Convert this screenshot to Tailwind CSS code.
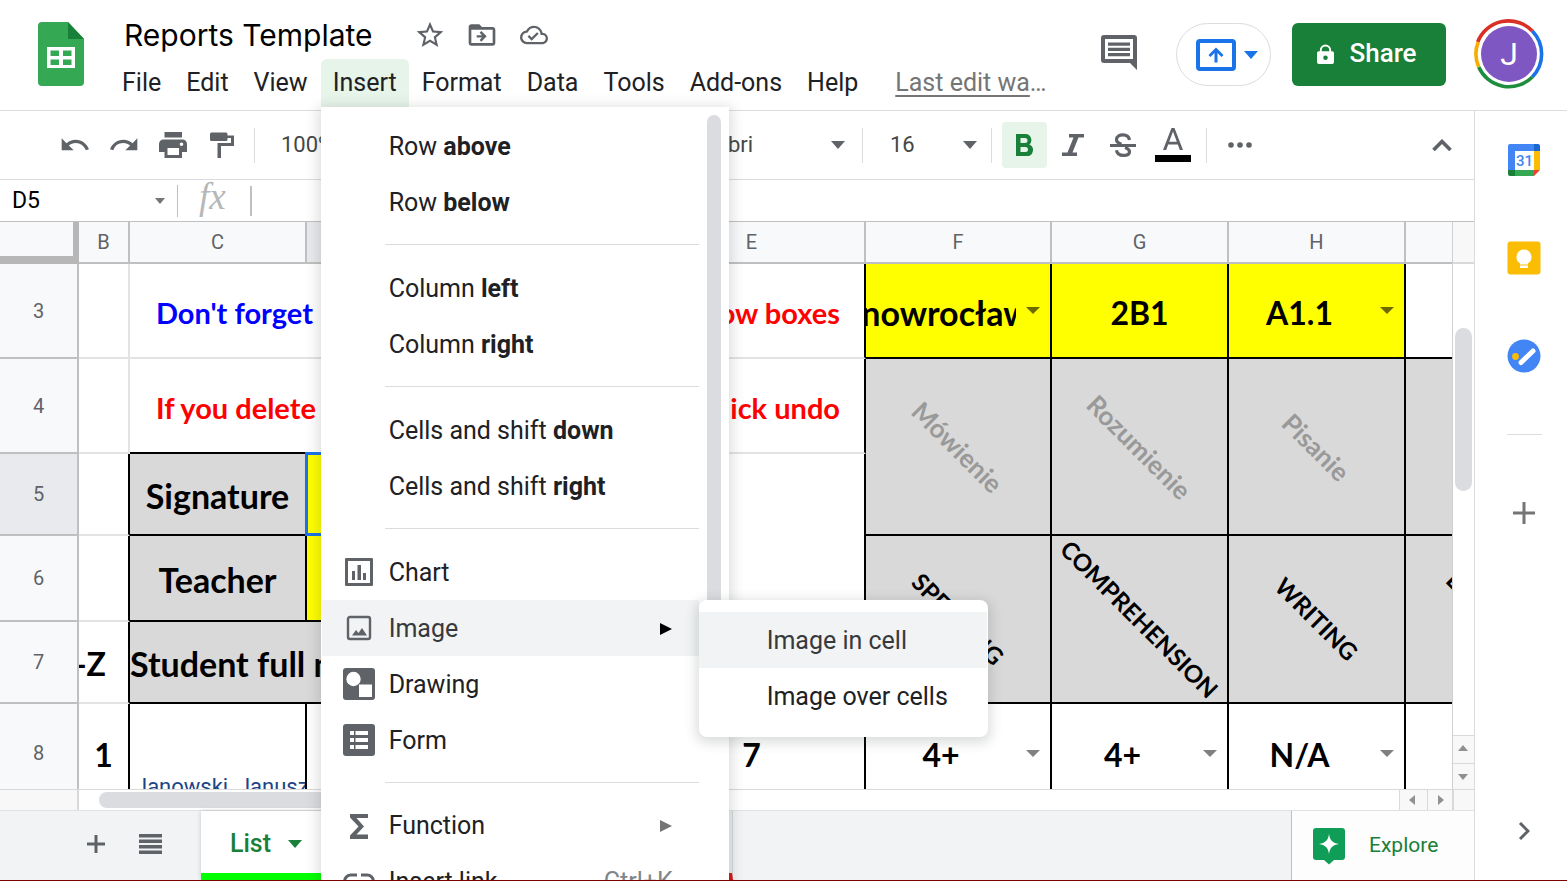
<!DOCTYPE html>
<html lang="en">
<head>
<meta charset="utf-8">
<title>Reports Template</title>
<script src="https://cdn.jsdelivr.net/npm/@tailwindcss/browser@4"></script>
</head>
<body class="bg-white font-['Roboto',sans-serif] text-[#202124]">
<div class="flex h-screen flex-col overflow-hidden">

  <!-- Title bar -->
  <header class="relative z-20 flex h-[111px] shrink-0 border-b border-[#dadce0] bg-white">
    <a href="#" aria-label="Sheets home" class="mt-[22px] ml-[38px] block h-16 w-[46px] shrink-0">
      <svg viewBox="0 0 46 64" class="h-16 w-[46px]"><path d="M4 0H30L46 17V60a4 4 0 0 1-4 4H4a4 4 0 0 1-4-4V4a4 4 0 0 1 4-4z" fill="#34a853"/><path d="M30 0 46 17H30z" fill="#188038"/><path fill="#fff" fill-rule="evenodd" d="M9 25H37V46H9zM12.500 28.500V34H21V28.500zM25 28.500V34H33.500V28.500zM12.500 37.500V43H21V37.500zM25 37.500V43H33.500V37.500z"/></svg>
    </a>
    <div class="ml-[26px] flex flex-col">
      <div class="flex h-[59px] items-center pt-[11px] pl-[14px] text-[#5f6368]">
        <h1 class="font-['Inter',sans-serif] text-[30px] leading-9 whitespace-nowrap text-black">Reports Template</h1>
        <div class="ml-[41px] flex items-center gap-5">
          <button aria-label="Star"><svg viewBox="0 0 24 24" class="size-8" fill="currentColor"><path d="M22 9.240l-7.190-.620L12 2 9.190 8.630 2 9.240l5.460 4.730L5.820 21 12 17.270 18.180 21l-1.630-7.030L22 9.240zM12 15.400l-3.760 2.270 1-4.280-3.320-2.880 4.380-.380L12 6.100l1.710 4.040 4.380.380-3.320 2.880 1 4.280L12 15.400z"/></svg></button>
          <button aria-label="Move"><svg viewBox="0 0 24 24" class="size-8" fill="currentColor"><path d="M20 6h-8l-2-2H4c-1.100 0-2 .9-2 2v12c0 1.100.9 2 2 2h16c1.100 0 2-.9 2-2V8c0-1.100-.9-2-2-2zm0 12H4V8h16v10zM11.500 17l4-4-4-4-1.300 1.300 1.800 1.800H8v1.800h4l-1.800 1.800z"/></svg></button>
          <button aria-label="Document status"><svg viewBox="0 0 24 24" class="ml-[2px] size-7" fill="currentColor"><path d="M19.350 10.040A7.490 7.490 0 0 0 12 4C9.110 4 6.600 5.640 5.350 8.040A5.994 5.994 0 0 0 0 14c0 3.310 2.690 6 6 6h13c2.760 0 5-2.240 5-5 0-2.640-2.050-4.780-4.650-4.960zM19 18H6c-2.210 0-4-1.790-4-4 0-2.050 1.530-3.760 3.560-3.970l1.070-.110.5-.950A5.469 5.469 0 0 1 12 6c2.620 0 4.880 1.860 5.390 4.430l.3 1.500 1.530.110A2.980 2.980 0 0 1 22 15c0 1.650-1.350 3-3 3zm-9-3.820-2.090-2.090L6.500 13.500 10 17l6.010-6.010-1.410-1.410z"/></svg></button>
        </div>
      </div>
      <nav class="flex h-12 items-center gap-px text-[25px] leading-8">
        <button class="h-12 px-3">File</button>
        <button class="h-12 px-3">Edit</button>
        <button class="h-12 px-3">View</button>
        <div class="relative">
          <button class="h-12 rounded-t-md bg-[#e6f4ea] px-3" aria-expanded="true">Insert</button>
          <!-- Insert menu -->
          <div role="menu" class="absolute top-full left-0 flex w-[408px] flex-col bg-white pt-[11px] pb-3 shadow-[0_3px_12px_3px_rgba(60,64,67,0.18)]">
            <div class="absolute top-2 right-2 h-[540px] w-[14px] rounded-full bg-[#dadce0]"></div>
            <button role="menuitem" class="h-14 pt-0.5 pl-[68px] text-left">Row <b>above</b></button>
            <button role="menuitem" class="h-14 pt-0.5 pl-[68px] text-left">Row <b>below</b></button>
            <hr class="my-[14px] mr-[30px] ml-16 h-0.5 border-0 border-t border-[#dadce0]">
            <button role="menuitem" class="h-14 pt-0.5 pl-[68px] text-left">Column <b>left</b></button>
            <button role="menuitem" class="h-14 pt-0.5 pl-[68px] text-left">Column <b>right</b></button>
            <hr class="my-[14px] mr-[30px] ml-16 h-0.5 border-0 border-t border-[#dadce0]">
            <button role="menuitem" class="h-14 pt-0.5 pl-[68px] text-left">Cells and shift <b>down</b></button>
            <button role="menuitem" class="h-14 pt-0.5 pl-[68px] text-left">Cells and shift <b>right</b></button>
            <hr class="my-[14px] mr-[30px] ml-16 h-0.5 border-0 border-t border-[#dadce0]">
            <button role="menuitem" class="flex h-14 items-center gap-[13px] pt-0.5 pl-[21px]"><svg viewBox="0 0 34 34" class="size-[34px]"><path fill="#5f6368" fill-rule="evenodd" d="M4 2H30a1 1 0 0 1 1 1V29a1 1 0 0 1-1 1H4a1 1 0 0 1-1-1V3a1 1 0 0 1 1-1zM6 5V27H28V5zM10 15h3v9h-3zM15.500 9h3.500v15h-3.500zM21 17h3v7h-3z"/></svg>Chart</button>
            <div class="relative">
              <button role="menuitem" aria-expanded="true" class="ml-px flex h-14 w-[377px] items-center gap-[13px] bg-[#f1f3f4] pt-0.5 pl-5 text-[#37393c]"><svg viewBox="0 0 34 34" class="size-[34px]"><rect x="6" y="5" width="22" height="22" rx="2" fill="none" stroke="#5f6368" stroke-width="2.400"/><path fill="#5f6368" d="M10 23.500l4-5.500 2.500 3 3.500-5 5 7.500z"/></svg>Image<svg viewBox="0 0 12 12" class="mr-[27px] ml-auto size-3"><path d="M0 0 12 6 0 12z" fill="#000"/></svg></button>
              <!-- Image submenu -->
              <div role="menu" class="absolute top-0 left-[378px] flex w-[289px] flex-col rounded-lg bg-white pt-3 pb-[13px] shadow-[0_3px_12px_3px_rgba(60,64,67,0.18)]">
                <button role="menuitem" class="mr-px h-14 bg-[#f1f3f4] pt-0.5 pl-[68px] text-left text-[#37393c]">Image in cell</button>
                <button role="menuitem" class="h-14 pt-0.5 pl-[68px] text-left">Image over cells</button>
              </div>
            </div>
            <button role="menuitem" class="flex h-14 items-center gap-[13px] pt-0.5 pl-[21px]"><svg viewBox="0 0 34 34" class="size-[34px]"><rect x="1" y="0" width="32" height="32" rx="3" fill="#5f6368"/><circle cx="11.500" cy="11" r="7.200" fill="#fff"/><path fill="#fff" d="M17 16.500h13V29H17z"/></svg>Drawing</button>
            <button role="menuitem" class="flex h-14 items-center gap-[13px] pt-0.5 pl-[21px]"><svg viewBox="0 0 34 34" class="size-[34px]"><rect x="1" y="0" width="32" height="32" rx="3" fill="#5f6368"/><path fill="#fff" d="M8 7h4v4H8zM13.500 7H26v4H13.500zM8 14h4v4H8zM13.500 14H26v4H13.500zM8 21h4v4H8zM13.500 21H26v4H13.500z"/></svg>Form</button>
            <hr class="my-[14px] mr-[30px] ml-16 h-px border-0 border-t border-[#dadce0]">
            <button role="menuitem" class="flex h-14 items-center gap-[13px] pt-0.5 pl-[21px]"><svg viewBox="0 0 34 34" class="size-[34px]"><path fill="#5f6368" d="M8 5H26v4H14.500l7.500 8.500-7.500 8H26V30H8v-3.500l8.500-9L8 8.500z"/></svg>Function<svg viewBox="0 0 12 12" class="mr-[57px] ml-auto size-3"><path d="M0 0 12 6 0 12z" fill="#757575"/></svg></button>
            <button role="menuitem" class="flex h-14 items-center gap-[13px] pt-0.5 pl-[21px]"><svg viewBox="0 0 34 34" class="size-[34px]" fill="none" stroke="#5f6368" stroke-width="3"><path d="M15 10H9a6.500 6.500 0 0 0 0 13h6M19 10h6a6.500 6.500 0 0 1 0 13h-6M10 16.500h14"/></svg>Insert link<span class="mr-14 ml-auto text-[#80868b]">Ctrl+K</span></button>
          </div>
        </div>
        <button class="h-12 px-3">Format</button>
        <button class="h-12 px-3">Data</button>
        <button class="h-12 px-3">Tools</button>
        <button class="h-12 px-3">Add-ons</button>
        <button class="h-12 px-3">Help</button>
        <a href="#" class="ml-6 w-[152px] truncate text-[#757575] underline underline-offset-4">Last edit was seconds ago</a>
      </nav>
    </div>
    <div class="ml-auto flex items-start pr-[23px]">
      <button aria-label="Open comment history" class="mt-[33px] mr-[37px]"><svg viewBox="0 0 40 40" class="size-10"><path fill="#5f6368" fill-rule="evenodd" d="M5 2H35a3 3 0 0 1 3 3V37l-7-7H5a3 3 0 0 1-3-3V5a3 3 0 0 1 3-3zM6 6V26H34V6zM9 9.500H31v3.200H9zM9 14.700H31v3.200H9zM9 20H31v3.200H9z"/></svg></button>
      <button aria-label="Present" class="mt-[23px] mr-[21px] flex h-[63px] w-[95px] items-center justify-center gap-2 rounded-full border border-[#dadce0] pl-[6px]"><svg viewBox="0 0 40 32" class="h-8 w-10"><rect x="2" y="2" width="36" height="28" rx="2" fill="none" stroke="#1a73e8" stroke-width="4"/><path fill="#1a73e8" d="M20 8.500l7.500 7.500-2 2-4-4V23.500h-3V14l-4 4-2-2z"/></svg><svg viewBox="0 0 14 8" class="h-2 w-[14px]"><path d="M0 0H14L7 8z" fill="#1a73e8"/></svg></button>
      <button class="mt-[23px] mr-[28px] flex h-[63px] w-[154px] items-center justify-center gap-[15px] rounded-md bg-[#188038] pr-1 pb-[3px] text-[26px] font-medium text-white"><svg viewBox="0 0 18 22" class="mt-[3px] h-[21px] w-[17px]"><path fill="#fff" fill-rule="evenodd" d="M2 7.500H3V6.500a6 6 0 0 1 12 0V7.500h1a2 2 0 0 1 2 2V19a2 2 0 0 1-2 2H2a2 2 0 0 1-2-2V9.500a2 2 0 0 1 2-2zM5 7.500h8V6.500a4 4 0 0 0-8 0zM9 12a2.400 2.400 0 1 0 0 4.800A2.400 2.400 0 0 0 9 12z"/></svg>Share</button>
      <button aria-label="Google Account" class="relative mt-[19px] flex size-[70px] items-center justify-center"><svg viewBox="0 0 70 70" class="absolute inset-0 size-[70px]" fill="none" stroke-width="3.600"><path d="M3.700 23A33 33 0 0 1 58.300 12" stroke="#d93025"/><path d="M58.300 12A33 33 0 0 1 58.300 58" stroke="#1a73e8"/><path d="M58.300 58A33 33 0 0 1 4.700 48" stroke="#1e8e3e"/><path d="M4.700 48A33 33 0 0 1 4.200 23" stroke="#f9ab00"/><circle cx="35" cy="35" r="28" fill="#7e57c2" stroke="none"/></svg><span class="relative text-[32px] leading-8 text-white">J</span></button>
    </div>
  </header>

  <div class="flex min-h-0 flex-1">
    <main class="flex min-w-0 flex-1 flex-col">

      <!-- Toolbar -->
      <div class="flex h-[69px] shrink-0 items-center border-b border-[#dadce0] pl-[50px] text-[22px] text-[#5f6368]">
        <button aria-label="Undo" class="flex w-[49px] justify-center"><svg viewBox="0 0 24 24" class="size-8" fill="currentColor"><path d="M12.500 8c-2.650 0-5.050.990-6.900 2.600L2 7v9h9l-3.620-3.620c1.390-1.160 3.160-1.880 5.120-1.880 3.540 0 6.550 2.310 7.600 5.500l2.370-.780C21.080 11.030 17.150 8 12.500 8z"/></svg></button>
        <button aria-label="Redo" class="flex w-[49px] justify-center"><svg viewBox="0 0 24 24" class="size-8" fill="currentColor"><path d="M18.400 10.600C16.550 8.990 14.150 8 11.500 8c-4.650 0-8.580 3.030-9.960 7.220L3.900 16a8.002 8.002 0 0 1 7.600-5.500c1.950 0 3.730.720 5.120 1.880L13 16h9V7l-3.600 3.600z"/></svg></button>
        <button aria-label="Print" class="flex w-[49px] justify-center"><svg viewBox="0 0 28 26" class="h-[26px] w-7" fill="currentColor"><path fill-rule="evenodd" d="M5.500 0h17.500v5.500H5.500zM4.500 7.500H23.500a4.500 4.500 0 0 1 4.500 4.500V20H23v6H5.500V20H0v-8a4.500 4.500 0 0 1 4.500-4.500zM8.500 16v7H20V16zM22.500 10.500a1.800 1.800 0 1 0 0 3.600 1.800 1.800 0 0 0 0-3.600z"/></svg></button>
        <button aria-label="Paint format" class="flex w-[50px] justify-center"><svg viewBox="0 0 26 26" class="size-[26px]" fill="currentColor"><path d="M18.500 3.500V2A1.500 1.500 0 0 0 17 .5H2.500A1.500 1.500 0 0 0 1 2V7.500A1.500 1.500 0 0 0 2.500 9H17a1.500 1.500 0 0 0 1.500-1.500V6H22v5H8.500V26H12V14H25V3.500z"/></svg></button>
        <span class="ml-[7px] h-[35px] w-px bg-[#dadce0]"></span>
        <select aria-label="Zoom" class="ml-[26px] w-[110px] appearance-none pb-0.5 text-[#444746]"><option>100%</option></select>
        <label class="ml-[300px] flex w-[171px] items-center justify-between pr-[17px] text-[#444746]"><select aria-label="Font" class="w-[120px] appearance-none pb-0.5"><option>Calibri</option></select><svg viewBox="0 0 14 8" class="h-2 w-[14px]"><path d="M0 0H14L7 8z" fill="#5f6368"/></svg></label>
        <span class="h-[35px] w-px bg-[#dadce0]"></span>
        <label class="ml-[27px] flex w-[101px] items-center justify-between pr-[14px] text-[#444746]"><select aria-label="Font size" class="w-[50px] appearance-none pb-0.5"><option>16</option></select><svg viewBox="0 0 14 8" class="h-2 w-[14px]"><path d="M0 0H14L7 8z" fill="#5f6368"/></svg></label>
        <span class="h-[35px] w-px bg-[#dadce0]"></span>
        <button aria-label="Bold" class="ml-[10px] flex h-[46px] w-[45px] items-center justify-center rounded bg-[#e6f4ea] text-[#188038]"><svg viewBox="0 0 17 22" class="h-[22px] w-[17px]"><path fill="currentColor" fill-rule="evenodd" d="M0 0H9.500a6 6 0 0 1 3.800 10.500A6 6 0 0 1 10.500 22H0zM4.500 4V9H9a2.500 2.500 0 0 0 0-5zM4.500 13v5H9.500a2.500 2.500 0 0 0 0-5z"/></svg></button>
        <button aria-label="Italic" class="flex w-[52px] justify-center"><svg viewBox="0 0 22 22" class="size-[22px]"><path fill="currentColor" d="M7 0H22V3.500H16.500L10.500 18.500H15V22H0V18.500H5.500L11.500 3.500H7z"/></svg></button>
        <button aria-label="Strikethrough" class="flex w-[47px] justify-center"><svg viewBox="0 0 26 24" class="h-6 w-[26px]" fill="none" stroke="currentColor"><path stroke-width="3.200" d="M19.500 7C19 3.500 16.500 1.800 13 1.800S6.500 3.500 6.500 6.500C6.500 9 8.500 10.300 11.500 11.200M15 14.500c3 1 4.500 2.200 4.500 4.300 0 2.500-2.500 3.600-6 3.600s-6.500-1.700-7-5.200"/><path stroke-width="3" d="M0 12.500H26"/></svg></button>
        <button aria-label="Text color" class="mx-[9px] flex h-[34px] w-9 flex-col items-center justify-between"><svg viewBox="0 0 20 22" class="h-[22px] w-5"><path fill="currentColor" fill-rule="evenodd" d="M8.500 0h3L20 22H16.800L14.800 16.500H5.200L3.200 22H0zM10 3.500 6.200 13.700H13.800z"/></svg><span class="h-[7px] w-9 bg-black"></span></button>
        <span class="ml-[6px] h-[35px] w-px bg-[#dadce0]"></span>
        <button aria-label="More" class="ml-[21px]"><svg viewBox="0 0 24 6" class="h-[6px] w-6" fill="currentColor"><circle cx="3" cy="3" r="2.800"/><circle cx="12" cy="3" r="2.800"/><circle cx="21" cy="3" r="2.800"/></svg></button>
        <button aria-label="Hide the menus" class="mr-[22px] ml-auto"><svg viewBox="0 0 20 12" class="h-3 w-5"><path d="M1.500 11 10 2.500 18.500 11" fill="none" stroke="currentColor" stroke-width="3.600"/></svg></button>
      </div>

      <!-- Formula bar -->
      <div class="flex h-[42px] shrink-0 items-center border-b border-[#c0c0c0]">
        <input aria-label="Name box" value="D5" class="w-[155px] pt-0.5 pl-3 text-[23px] text-black outline-none">
        <svg viewBox="0 0 10 6" class="h-[6px] w-[10px]"><path d="M0 0H10L5 6z" fill="#757575"/></svg>
        <span class="ml-3 h-8 w-px bg-[#c0c0c0]"></span>
        <label for="formula" class="ml-[21px] w-[51px] pb-2 font-['Liberation_Serif',serif] text-[37px] leading-8 text-[#b7b7b7] italic">fx</label>
        <span class="h-[30px] w-0.5 bg-[#c0c0c0]"></span>
        <input id="formula" aria-label="Formula" class="min-w-0 flex-1 outline-none">
      </div>

      <div class="flex min-h-0 flex-1">
        <!-- Cell grid -->
        <div class="min-w-0 flex-1 overflow-hidden">
          <table class="w-[1583px] table-fixed border-separate border-spacing-0 font-['Lato',sans-serif] text-[32px] leading-9 font-bold whitespace-nowrap text-black">
            <colgroup><col class="w-[79px]"><col class="w-[51px]"><col class="w-[177px]"><col class="w-[332px]"><col class="w-[227px]"><col class="w-[186px]"><col class="w-[177px]"><col class="w-[177px]"><col class="w-[177px]"></colgroup>
            <thead class="bg-[#f8f9fa] font-['Roboto',sans-serif] text-[20px] text-[#5f6368]">
              <tr class="h-[42px]">
                <th class="border-r-[6px] border-b-8 border-[#b7b7b7] p-0"></th>
                <th class="border-r-2 border-b-2 border-[#c0c0c0] p-0 font-normal">B</th>
                <th class="border-r-2 border-b-2 border-[#c0c0c0] p-0 font-normal">C</th>
                <th class="border-r-2 border-b-2 border-[#c0c0c0] bg-[#e8eaed] p-0 font-normal"></th>
                <th class="border-r-2 border-b-2 border-[#c0c0c0] p-0 font-normal">E</th>
                <th class="border-r-2 border-b-2 border-[#c0c0c0] p-0 font-normal">F</th>
                <th class="border-r-2 border-b-2 border-[#c0c0c0] p-0 font-normal">G</th>
                <th class="border-r-2 border-b-2 border-[#c0c0c0] p-0 font-normal">H</th>
                <th class="border-r-2 border-b-2 border-[#c0c0c0] p-0 font-normal"></th>
              </tr>
            </thead>
            <tbody>
              <tr class="h-[95px]">
                <th class="border-r-2 border-b-2 border-[#c0c0c0] bg-[#f8f9fa] p-0 font-['Roboto',sans-serif] text-[20px] font-normal text-[#5f6368]">3</th>
                <td class="border-r-2 border-b-2 border-[#e2e3e3] p-0"></td>
                <td class="border-b-2 border-[#e2e3e3] p-0 pt-1 pl-[26px] text-[29px] text-[#0000ff]">Don't forget</td>
                <td class="border-b-2 border-[#e2e3e3] p-0"></td>
                <td class="border-r-2 border-b-2 border-r-black border-b-[#e2e3e3] p-0 pt-1 pr-6 text-right text-[29px] text-[#ff0000]">yellow boxes</td>
                <td class="border-r-2 border-b-2 border-black bg-[#ffff00] p-0 text-[34px]"><div class="flex items-center pt-1"><span class="flex w-[150px] justify-center overflow-hidden">Inowrocław</span><svg viewBox="0 0 14 7" class="mb-1 ml-[10px] h-[7px] w-[14px]"><path d="M0 0H14L7 7z" fill="#6b6b00"/></svg></div></td>
                <td class="border-r-2 border-b-2 border-black bg-[#ffff00] p-0 pt-1 text-center">2B1</td>
                <td class="border-r-2 border-b-2 border-black bg-[#ffff00] p-0"><div class="flex items-center pt-1"><span class="w-[141px] text-center">A1.1</span><svg viewBox="0 0 14 7" class="mb-1 ml-[10px] h-[7px] w-[14px]"><path d="M0 0H14L7 7z" fill="#6b6b00"/></svg></div></td>
                <td class="border-b-2 border-black p-0"></td>
              </tr>
              <tr class="h-[95px]">
                <th class="border-r-2 border-b-2 border-[#c0c0c0] bg-[#f8f9fa] p-0 font-['Roboto',sans-serif] text-[20px] font-normal text-[#5f6368]">4</th>
                <td class="border-r-2 border-b-2 border-[#e2e3e3] p-0"></td>
                <td class="border-b-2 border-black p-0 pt-1 pl-[26px] text-[29px] text-[#ff0000]">If you delete</td>
                <td class="border-b-2 border-black p-0"></td>
                <td class="border-r-2 border-b-2 border-r-black border-b-[#e2e3e3] p-0 pt-1 pr-6 text-right text-[29px] text-[#ff0000]">click undo</td>
                <td rowspan="2" class="border-r-2 border-b-2 border-black bg-[#d9d9d9] p-0 text-[26px] text-[#999999]"><div class="flex justify-center"><span class="rotate-45">Mówienie</span></div></td>
                <td rowspan="2" class="border-r-2 border-b-2 border-black bg-[#d9d9d9] p-0 text-[26px] text-[#999999]"><div class="flex justify-center"><span class="rotate-45">Rozumienie</span></div></td>
                <td rowspan="2" class="border-r-2 border-b-2 border-black bg-[#d9d9d9] p-0 text-[26px] text-[#999999]"><div class="flex justify-center"><span class="rotate-45">Pisanie</span></div></td>
                <td rowspan="2" class="border-b-2 border-black bg-[#d9d9d9] p-0"></td>
              </tr>
              <tr class="h-[82px]">
                <th class="border-r-2 border-b-2 border-[#c0c0c0] bg-[#e8eaed] p-0 font-['Roboto',sans-serif] text-[20px] font-normal text-[#5f6368]">5</th>
                <td class="border-r-2 border-b-2 border-r-black border-b-[#e2e3e3] p-0"></td>
                <td class="border-r-2 border-b-2 border-black bg-[#d9d9d9] p-0 pt-1 text-center text-[34px]">Signature</td>
                <td class="relative border-r-2 border-b-2 border-black bg-[#ffff00] p-0"><div class="absolute -inset-0.5 border-3 border-[#1a73e8]"></div></td>
                <td rowspan="3" class="border-r-2 border-b-2 border-black p-0"></td>
              </tr>
              <tr class="h-[86px]">
                <th class="border-r-2 border-b-2 border-[#c0c0c0] bg-[#f8f9fa] p-0 font-['Roboto',sans-serif] text-[20px] font-normal text-[#5f6368]">6</th>
                <td class="border-r-2 border-b-2 border-r-black border-b-[#e2e3e3] p-0"></td>
                <td class="border-r-2 border-b-2 border-black bg-[#d9d9d9] p-0 pt-1 text-center text-[34px]">Teacher</td>
                <td class="border-r-2 border-b-2 border-black bg-[#ffff00] p-0"></td>
                <td rowspan="2" class="border-r-2 border-b-2 border-black bg-[#d9d9d9] p-0 text-[24px]"><div class="flex justify-center"><span class="rotate-45">SPEAKING</span></div></td>
                <td rowspan="2" class="border-r-2 border-b-2 border-black bg-[#d9d9d9] p-0 text-[24px]"><div class="flex justify-center"><span class="rotate-45">COMPREHENSION</span></div></td>
                <td rowspan="2" class="border-r-2 border-b-2 border-black bg-[#d9d9d9] p-0 text-[24px]"><div class="flex justify-center"><span class="rotate-45">WRITING</span></div></td>
                <td rowspan="2" class="border-b-2 border-black bg-[#d9d9d9] p-0 text-[24px]"><div class="flex justify-center"><span class="rotate-45">LISTENING</span></div></td>
              </tr>
              <tr class="h-[82px]">
                <th class="border-r-2 border-b-2 border-[#c0c0c0] bg-[#f8f9fa] p-0 font-['Roboto',sans-serif] text-[20px] font-normal text-[#5f6368]">7</th>
                <td class="border-r-2 border-b-2 border-r-black border-b-[#e2e3e3] p-0 pt-1"><div class="flex w-[27px] justify-end overflow-hidden">-Z</div></td>
                <td colspan="2" class="border-r-2 border-b-2 border-black bg-[#d9d9d9] p-0 pt-1 text-[34px]">Student full name</td>
              </tr>
              <tr class="h-[100px]">
                <th class="border-r-2 border-b-2 border-[#c0c0c0] bg-[#f8f9fa] p-0 font-['Roboto',sans-serif] text-[20px] font-normal text-[#5f6368]">8</th>
                <td class="border-r-2 border-b-2 border-black p-0 pt-1 text-center">1</td>
                <td class="overflow-hidden border-r-2 border-b-2 border-black p-0 pl-[5px] align-bottom font-['Roboto',sans-serif] text-[22px] leading-[30px] font-normal text-[#1c4587]">Janowski, Janusz</td>
                <td class="border-r-2 border-b-2 border-black p-0"></td>
                <td class="border-r-2 border-b-2 border-black p-0 pt-1 text-center">7</td>
                <td class="border-r-2 border-b-2 border-black p-0"><div class="flex items-center pt-1"><span class="w-[150px] text-center">4+</span><svg viewBox="0 0 14 7" class="mb-1 ml-[10px] h-[7px] w-[14px]"><path d="M0 0H14L7 7z" fill="#808080"/></svg></div></td>
                <td class="border-r-2 border-b-2 border-black p-0"><div class="flex items-center pt-1"><span class="w-[141px] text-center">4+</span><svg viewBox="0 0 14 7" class="mb-1 ml-[10px] h-[7px] w-[14px]"><path d="M0 0H14L7 7z" fill="#808080"/></svg></div></td>
                <td class="border-r-2 border-b-2 border-black p-0"><div class="flex items-center pt-1"><span class="w-[141px] text-center">N/A</span><svg viewBox="0 0 14 7" class="mb-1 ml-[10px] h-[7px] w-[14px]"><path d="M0 0H14L7 7z" fill="#808080"/></svg></div></td>
                <td class="border-b-2 border-black p-0"></td>
              </tr>
            </tbody>
          </table>
        </div>
        <!-- Vertical scroll bar -->
        <div class="flex w-[22px] shrink-0 flex-col border-l border-[#d0d0d0]">
          <div class="h-[42px] border-b-2 border-[#d9d9d9] bg-[#f8f8f8]"></div>
          <div class="flex-1 px-0.5 pt-16"><div class="h-[163px] rounded-full bg-[#dadce0]"></div></div>
          <button aria-label="Scroll up" class="flex h-7 items-center justify-center border-t border-[#d9d9d9] bg-[#f8f8f8] pr-0.5 pb-1"><svg viewBox="0 0 10 6" class="h-[6px] w-[10px]"><path d="M5 0 10 6H0z" fill="#909090"/></svg></button>
          <button aria-label="Scroll down" class="flex h-[26px] items-center justify-center border-t border-[#d9d9d9] bg-[#f8f8f8] pr-0.5"><svg viewBox="0 0 10 6" class="h-[6px] w-[10px]"><path d="M0 0H10L5 6z" fill="#909090"/></svg></button>
        </div>
      </div>

      <!-- Horizontal scroll bar -->
      <div class="flex h-[21px] shrink-0 border-t border-[#d9d9d9]">
        <div class="w-[79px] border-r-2 border-[#d9d9d9] bg-[#f8f8f8]"></div>
        <div class="flex-1 py-0.5 pl-5"><div class="h-4 w-[500px] rounded-full bg-[#dadce0]"></div></div>
        <button aria-label="Scroll left" class="flex w-7 items-center justify-center border-l border-[#d9d9d9] bg-[#f8f8f8] pr-1"><svg viewBox="0 0 6 10" class="h-[10px] w-[6px]"><path d="M6 0V10L0 5z" fill="#909090"/></svg></button>
        <button aria-label="Scroll right" class="flex w-[25px] items-center justify-center border-l border-[#d9d9d9] bg-[#f8f8f8] pl-0.5"><svg viewBox="0 0 6 10" class="h-[10px] w-[6px]"><path d="M0 0V10L6 5z" fill="#909090"/></svg></button>
        <div class="w-[22px] border-l-2 border-[#d9d9d9] bg-[#f8f8f8]"></div>
      </div>

      <!-- Sheet tabs -->
      <div class="flex h-[70px] shrink-0 items-stretch border-t border-[#e0e2e3] bg-[#f1f3f4]">
        <button aria-label="Add sheet" class="ml-[87px] pb-1"><svg viewBox="0 0 18 18" class="size-[18px]"><path d="M7.500 0h3V7.500H18v3H10.500V18H7.500V10.500H0v-3H7.500z" fill="#5f6368"/></svg></button>
        <button aria-label="All sheets" class="ml-[34px] pb-[3px]"><svg viewBox="0 0 23 20" class="h-5 w-[23px]"><path d="M0 0H23V3.500H0zM0 5.500H23V9H0zM0 11H23V14.500H0zM0 16.500H23V20H0z" fill="#5f6368"/></svg></button>
        <button class="ml-[39px] flex w-[130px] items-center gap-[17px] border-b-[7px] border-[#00ff00] bg-white pt-1 pl-[29px] text-[25px] font-medium text-[#188038] shadow-[0_0_4px_rgba(60,64,67,0.25)]">List<svg viewBox="0 0 14 8" class="h-2 w-[14px]"><path d="M0 0H14L7 8z" fill="#188038"/></svg></button>
        <button aria-label="Sheet 2" class="w-[402px] border-r border-b-[7px] border-r-[#d5d8da] border-b-[#dd1111] bg-[#ebedee]"></button>
        <button class="ml-auto flex w-[183px] items-center gap-[23px] border-l border-[#c0c0c0] bg-[#fdfdfd] pl-5 text-[21px] text-[#188038]"><svg viewBox="0 0 34 38" class="h-[38px] w-[34px]"><path d="M4 1H30a3 3 0 0 1 3 3V30a3 3 0 0 1-3 3H22l-5 4.500L12 33H4a3 3 0 0 1-3-3V4a3 3 0 0 1 3-3z" fill="#0f9d58"/><path d="M17 7c1 6.500 3.500 9 10 10-6.500 1-9 3.500-10 10-1-6.500-3.500-9-10-10 6.500-1 9-3.500 10-10z" fill="#fff"/></svg>Explore</button>
      </div>
    </main>

    <!-- Side panel -->
    <aside class="flex w-[93px] shrink-0 flex-col items-center border-l border-[#dadce0] pt-8 pl-[6px]">
      <a href="#" aria-label="Calendar"><svg viewBox="0 0 34 34" class="size-[34px]"><rect x="1" y="1" width="32" height="32" rx="2" fill="#fff"/><path d="M3 1H27V8H8V27H1V3a2 2 0 0 1 2-2z" fill="#4285f4"/><path d="M27 1h4a2 2 0 0 1 2 2V8H27z" fill="#1967d2"/><path d="M27 8h6V27H27z" fill="#fbbc04"/><path d="M8 27H27V33H8z" fill="#34a853"/><path d="M1 27H8V33H3a2 2 0 0 1-2-2z" fill="#188038"/><path d="M27 27h6l-6 6z" fill="#ea4335"/><text x="17.500" y="23" text-anchor="middle" font-family="Roboto" font-size="15" font-weight="500" fill="#4285f4">31</text></svg></a>
      <a href="#" aria-label="Keep" class="mt-16"><svg viewBox="0 0 34 34" class="size-[34px]"><rect x=".5" y=".5" width="33" height="33" rx="3" fill="#fbbc04"/><path d="M17 8.500a7.500 7.500 0 0 0-4 13.800V23.500h8V22.300A7.500 7.500 0 0 0 17 8.500zM13 24.500h8V27h-8z" fill="#fff"/></svg></a>
      <a href="#" aria-label="Tasks" class="mt-16"><svg viewBox="0 0 34 34" class="size-[34px]"><circle cx="17" cy="17" r="16.500" fill="#4285f4"/><circle cx="8.500" cy="17.500" r="3.400" fill="#fbbc04"/><path d="M14 23.500 26 12" stroke="#fff" stroke-width="5" stroke-linecap="round"/></svg></a>
      <span class="mt-[61px] h-px w-[35px] bg-[#dadce0]"></span>
      <button aria-label="Get add-ons" class="mt-[67px]"><svg viewBox="0 0 22 22" class="size-[22px]"><path d="M9.500 0h3V9.500H22v3H12.500V22H9.500V12.500H0v-3H9.500z" fill="#757575"/></svg></button>
      <button aria-label="Hide side panel" class="mt-auto mb-10"><svg viewBox="0 0 12 18" class="h-[18px] w-3"><path d="M2 1 10 9 2 17" fill="none" stroke="#5f6368" stroke-width="3"/></svg></button>
    </aside>
  </div>
  <div class="relative z-30 h-px shrink-0 bg-[#7a0000]"></div>
</div>
</body>
</html>
